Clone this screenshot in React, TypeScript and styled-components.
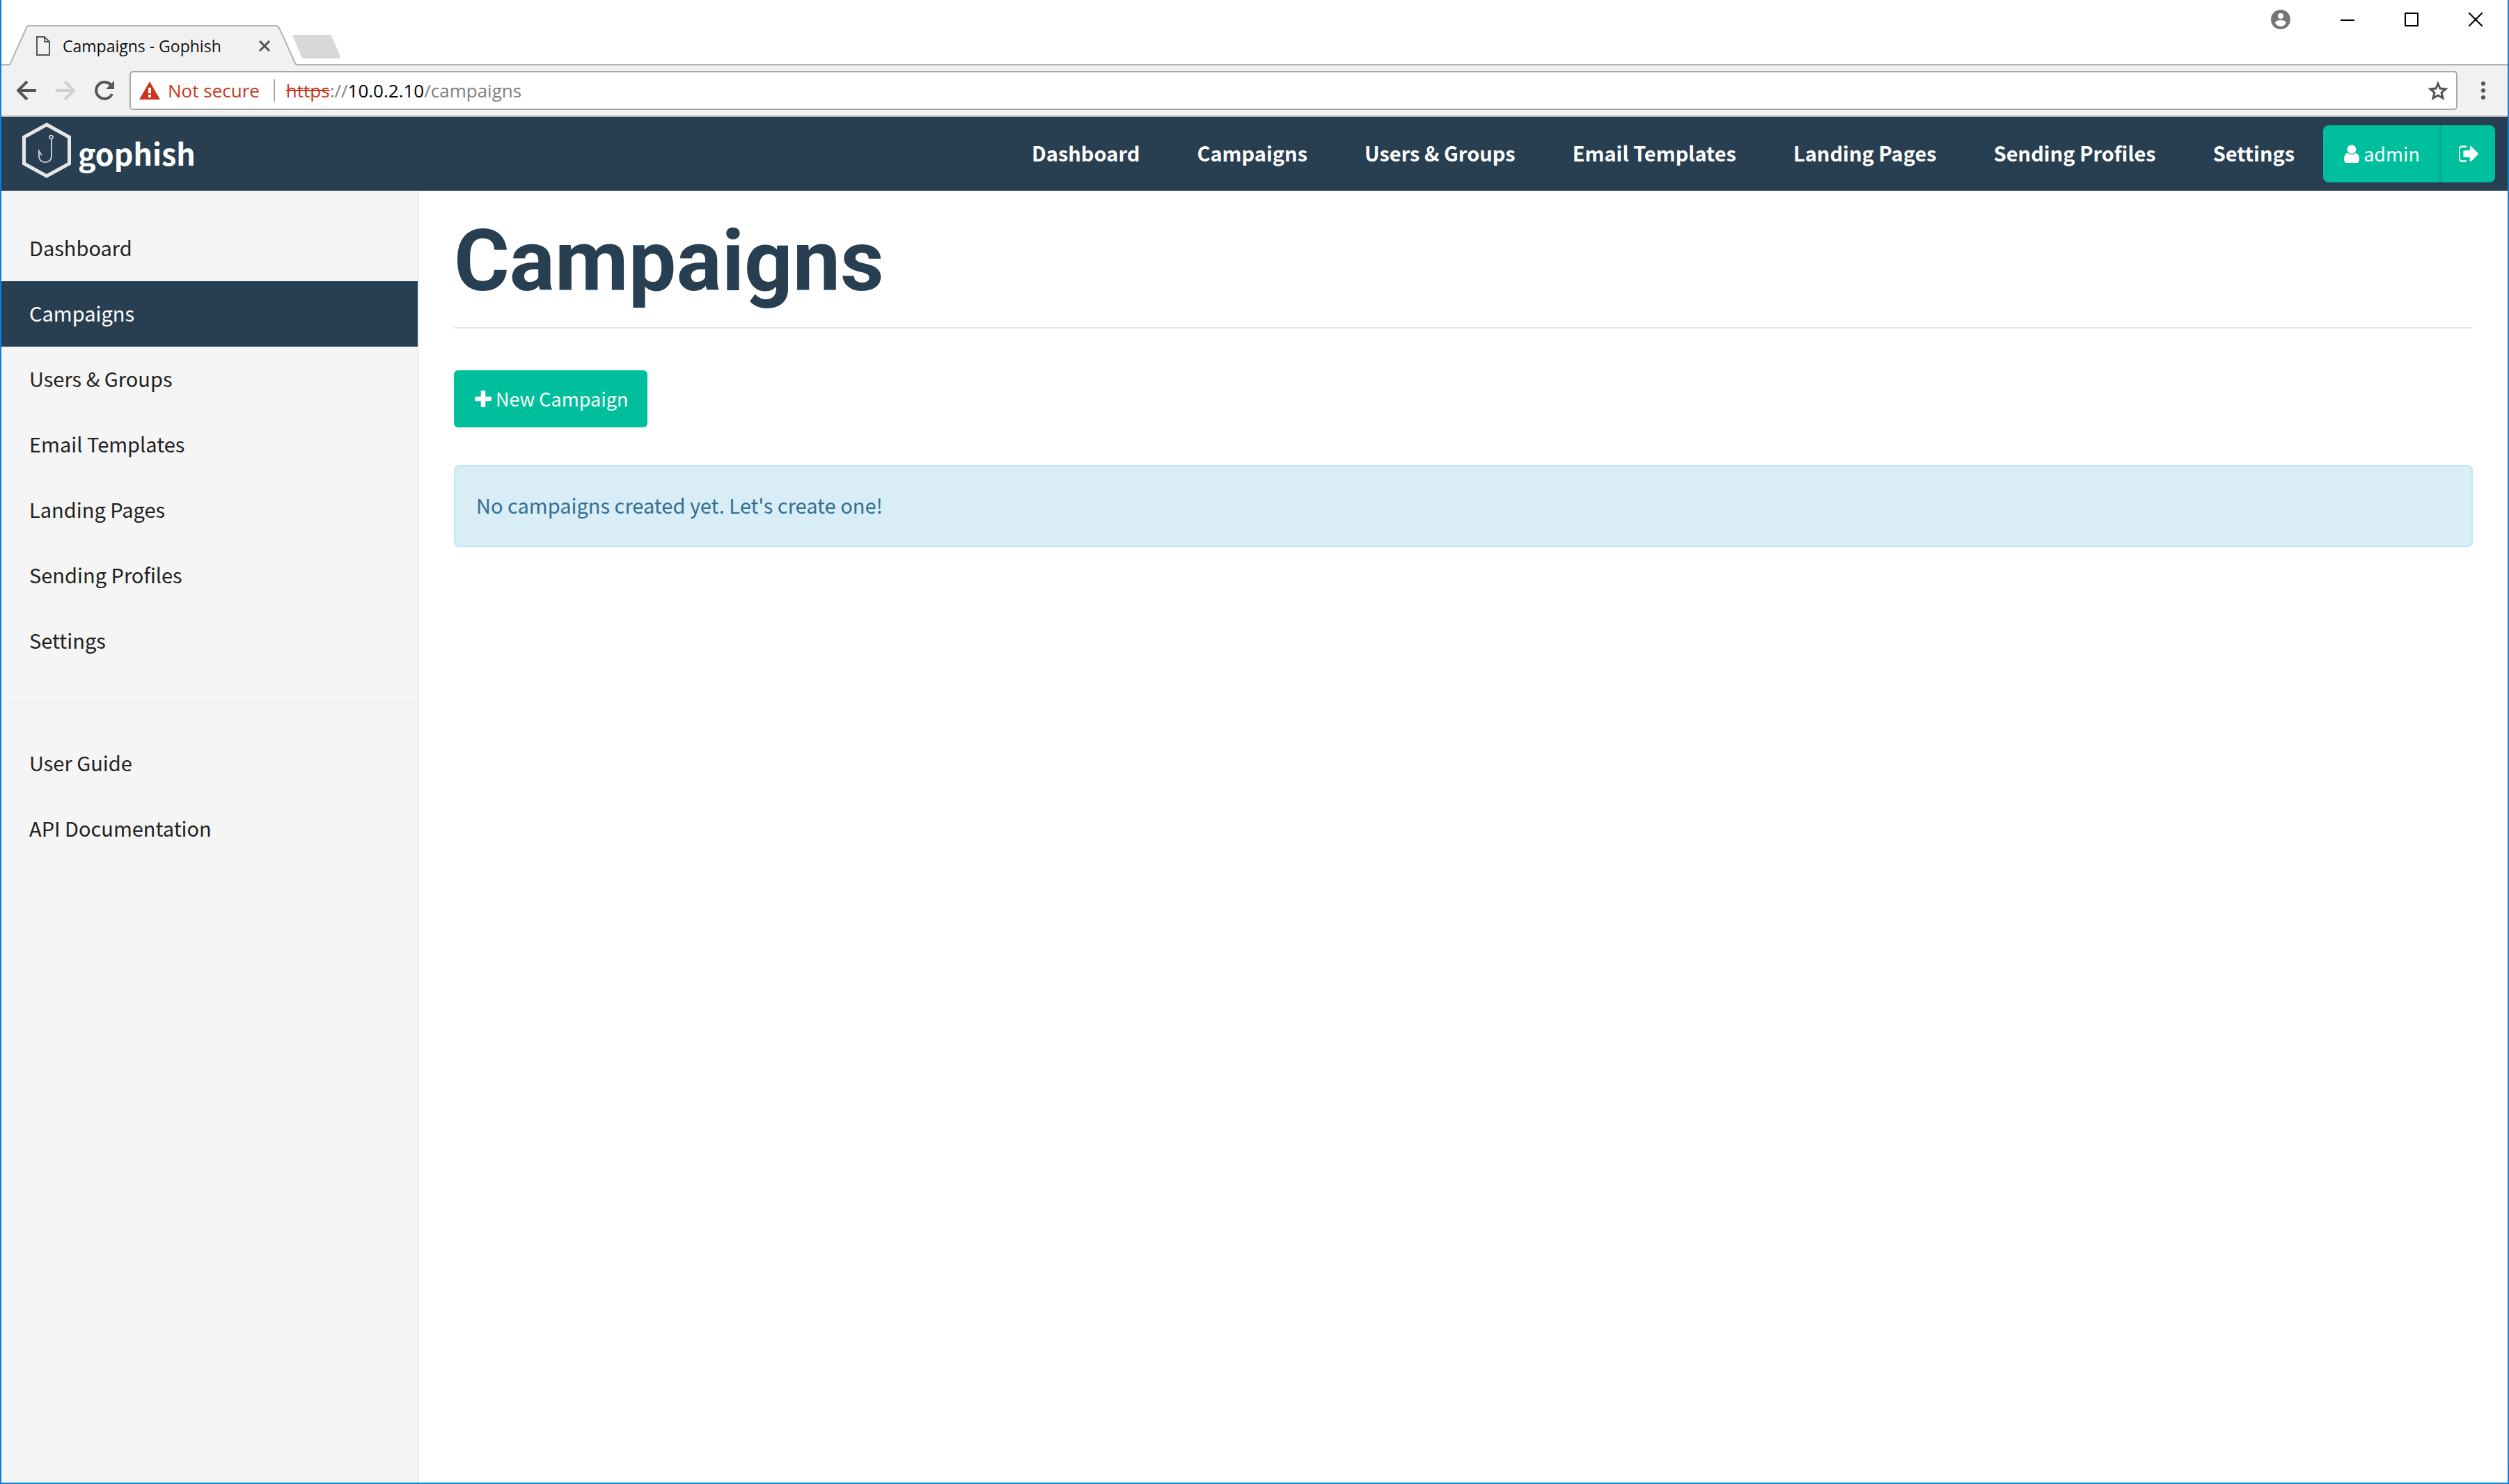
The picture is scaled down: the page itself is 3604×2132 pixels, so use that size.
import React from "react";
import styled, { createGlobalStyle } from "styled-components";

const sans = `"Noto Sans CJK SC", "Noto Sans", sans-serif`;
const chromeFont = `"Open Sans", "Noto Sans", sans-serif`;
const navy = "#283f52";
const green = "#00bf9d";

const GlobalStyle = createGlobalStyle`
  *, *::before, *::after { box-sizing: border-box; }
  body { margin: 0; background: #fff; font-family: ${sans}; }
  button { font: inherit; border: 0; padding: 0; background: none; cursor: pointer; }
  a { text-decoration: none; color: inherit; }
  ul { list-style: none; margin: 0; padding: 0; }
  svg { display: block; flex: none; }
`;

const Window = styled.div`
  min-height: 100vh;
  display: flex;
  flex-direction: column;
  border: 2px solid #0a80dc;
  border-top: 0;
`;

/* ---------- browser chrome ---------- */

const TitleBar = styled.header`
  height: 94px;
  display: flex;
  align-items: flex-end;
  padding-left: 12px;
  border-bottom: 2px solid #b2b2b2;
  font-family: ${chromeFont};
`;

const Tab = styled.div`
  display: grid;
  width: 412px;
  height: 58px;
  margin-bottom: -2px;
  > * { grid-area: 1 / 1; }
`;

const TabContent = styled.div`
  display: flex;
  align-items: center;
  padding: 2px 38px 0 38px;
  font-size: 23px;
  line-height: 32px;
  color: #111;
`;

const TabTitle = styled.span`
  flex: 1;
  margin-left: 18px;
  white-space: nowrap;
`;

const NewTab = styled.button`
  margin: 0 0 8px -6px;
`;

const WindowControls = styled.div`
  margin-left: auto;
  align-self: flex-start;
  display: flex;
  align-items: center;
  height: 56px;
`;

const WindowButton = styled.button`
  width: 92px;
  height: 56px;
  display: grid;
  place-items: center;
`;

const AccountButton = styled(WindowButton)`
  width: 100px;
`;

const Toolbar = styled.div`
  height: 74px;
  display: flex;
  align-items: center;
  padding: 0 20px 0 22px;
  background: #f1f1f1;
  border-bottom: 2px solid #b2b2b2;
  font-family: ${chromeFont};
`;

const ToolButton = styled.button`
  width: 28px;
  height: 28px;
  margin-right: 28px;
`;

const ReloadButton = styled(ToolButton)`
  margin-right: 22px;
`;

const MenuButton = styled.button`
  width: 30px;
  height: 28px;
  margin-left: 22px;
  display: grid;
  place-items: center;
`;

const AddressBar = styled.div`
  flex: 1;
  height: 56px;
  display: flex;
  align-items: center;
  padding: 0 12px;
  background: #fff;
  border: 2px solid #a9a9a9;
  border-radius: 5px;
  font-size: 26px;
  line-height: 36px;
`;

const Security = styled.button`
  display: flex;
  align-items: center;
  gap: 11px;
  color: #cb3520;
  white-space: nowrap;
`;

const Separator = styled.span`
  width: 2px;
  height: 32px;
  margin: 0 16px 0 20px;
  background: #a9a9a9;
`;

const Url = styled.div`
  flex: 1;
  color: #808080;
  white-space: nowrap;
`;

const Scheme = styled.span`
  color: #cb3520;
  text-decoration: line-through;
`;

const Host = styled.span`
  color: #000;
`;

/* ---------- web page ---------- */

const Navbar = styled.nav`
  height: 106px;
  display: flex;
  align-items: center;
  padding: 0 18px 0 30px;
  background: ${navy};
  color: #fff;
`;

const Brand = styled.a`
  display: flex;
  align-items: center;
  gap: 10px;
  margin-right: auto;
  padding-bottom: 4px;
  font-size: 43px;
  line-height: 60px;
  font-weight: 700;
`;

const BrandMark = styled.svg`
  margin-bottom: 6px;
`;

const NavList = styled.ul`
  display: flex;
`;

const NavLink = styled.a`
  display: block;
  padding: 0 41px 4px;
  font-size: 29px;
  line-height: 80px;
  font-weight: 700;
  white-space: nowrap;
`;

const ButtonGroup = styled.div`
  display: flex;
  height: 82px;
  border-radius: 8px;
  overflow: hidden;
`;

const Button = styled.button`
  height: 82px;
  display: flex;
  align-items: center;
  gap: 6px;
  padding: 0 28px 0 30px;
  border-radius: 6px;
  background: ${green};
  color: #fff;
  font-size: 27px;
  line-height: 40px;
`;

const GroupButton = styled(Button)`
  border-radius: 0;
  & + & {
    padding: 0 24px;
    border-left: 4px solid #00ad91;
  }
`;

const Page = styled.div`
  flex: 1;
  display: flex;
`;

const Sidebar = styled.aside`
  width: 600px;
  flex: none;
  padding-top: 36px;
  background: #f5f5f5;
  border-right: 2px solid #eee;
`;

const SideLink = styled.a<{ $active?: boolean }>`
  display: block;
  padding: 0 40px 4px;
  font-size: 29px;
  line-height: 90px;
  color: ${(p) => (p.$active ? "#fff" : "#222")};
  background: ${(p) => (p.$active ? navy : "transparent")};
`;

const Divider = styled.hr`
  height: 2px;
  margin: 40px 0;
  border: 0;
  background: #eee;
`;

const Main = styled.main`
  flex: 1;
  padding: 34px 50px;
`;

const Heading = styled.h1`
  margin: 0 0 60px;
  padding-bottom: 26px;
  border-bottom: 2px solid #e8e8ed;
  font-family: Roboto, sans-serif;
  font-size: 122px;
  line-height: 136px;
  font-weight: 700;
  color: ${navy};
`;

const Alert = styled.div`
  margin-top: 54px;
  padding: 32px 30px 36px;
  border: 2px solid #bce8f1;
  border-radius: 8px;
  background: #d9edf7;
  color: #31708f;
  font-size: 29px;
  line-height: 46px;
`;

const UserIcon = () => (
  <svg width="22" height="26" viewBox="256 128 1280 1536" fill="currentColor" aria-hidden="true">
    <path d="M1536 1399q0 109-62.5 187t-150.5 78h-854q-88 0-150.5-78t-62.5-187q0-85 8.5-160.5t31.5-152 58.5-131 94-89 134.5-34.5q131 128 313 128t313-128q76 0 134.5 34.5t94 89 58.5 131 31.5 152 8.5 160.5zm-256-887q0 159-112.5 271.5t-271.5 112.5-271.5-112.5-112.5-271.5 112.5-271.5 271.5-112.5 271.5 112.5 112.5 271.5z" />
  </svg>
);

const SignOutIcon = () => (
  <svg width="28" height="24" viewBox="96 256 1536 1280" fill="currentColor" aria-hidden="true">
    <path d="M704 1440q0 4 1 20t.5 26.5-3 23.5-10 19.5-20.5 6.5h-320q-119 0-203.5-84.5t-84.5-203.5v-704q0-119 84.5-203.5t203.5-84.5h320q13 0 22.5 9.5t9.5 22.5q0 4 1 20t.5 26.5-3 23.5-10 19.5-20.5 6.5h-320q-66 0-113 47t-47 113v704q0 66 47 113t113 47h312l11.5 1 11.5 3 8 5.5 7 9 2 13.5zm928-544q0 26-19 45l-544 544q-19 19-45 19t-45-19-19-45v-288h-448q-26 0-45-19t-19-45v-384q0-26 19-45t45-19h448v-288q0-26 19-45t45-19 45 19l544 544q19 19 19 45z" />
  </svg>
);

const PlusIcon = () => (
  <svg width="24" height="28" viewBox="192 16 1408 1643" fill="currentColor" aria-hidden="true">
    <path d="M1600 736v192q0 40-28 68t-68 28h-416v416q0 40-28 68t-68 28h-192q-40 0-68-28t-28-68v-416h-416q-40 0-68-28t-28-68v-192q0-40 28-68t68-28h416v-416q0-40 28-68t68-28h192q40 0 68 28t28 68v416h416q40 0 68 28t28 68z" />
  </svg>
);

const Arrow = ({ color, flip }: { color: string; flip?: boolean }) => (
  <svg width="28" height="28" viewBox="0 0 28 28" fill="none" stroke={color} strokeWidth="4" aria-hidden="true">
    <path d={flip ? "M0 14H25M13 1L26 14L13 27" : "M28 14H3M15 1L2 14L15 27"} />
  </svg>
);

const links = [
  "Dashboard",
  "Campaigns",
  "Users & Groups",
  "Email Templates",
  "Landing Pages",
  "Sending Profiles",
  "Settings",
];

export default function App() {
  return (
    <>
      <GlobalStyle />
      <Window>
        <TitleBar>
          <Tab>
            <svg width="412" height="58" viewBox="0 0 412 58" aria-hidden="true">
              <path d="M0 58L1 56L24 4Q25 1 28 1H382Q385 1 387 4L410 56L412 58Z" fill="#f1f1f1" />
              <path d="M0 57L24 4Q25 1 28 1H382Q385 1 387 4L411 57" fill="none" stroke="#b2b2b2" strokeWidth="2" />
            </svg>
            <TabContent>
              <svg width="20" height="28" viewBox="0 0 20 28" fill="none" stroke="#555" strokeWidth="2" aria-hidden="true">
                <path d="M1 1H12L19 8V27H1ZM12 1V8H19" />
              </svg>
              <TabTitle>Campaigns - Gophish</TabTitle>
              <button aria-label="Close tab">
                <svg width="16" height="16" viewBox="0 0 16 16" stroke="#555" strokeWidth="3" aria-hidden="true">
                  <path d="M1 1L15 15M15 1L1 15" />
                </svg>
              </button>
            </TabContent>
          </Tab>
          <NewTab aria-label="New tab">
            <svg width="70" height="34" viewBox="0 0 70 34" aria-hidden="true">
              <path d="M3 0H53Q56 0 57 3L69 31Q69 34 66 34H17Q14 34 13 31L1 3Q0 0 3 0Z" fill="#d8d8d8" />
            </svg>
          </NewTab>
          <WindowControls>
            <AccountButton aria-label="Account">
              <svg width="28" height="28" viewBox="0 0 28 28" aria-hidden="true">
                <circle cx="14" cy="14" r="14" fill="#757575" />
                <circle cx="14" cy="9" r="4" fill="#fff" />
                <path d="M6 19Q7 15 14 15T22 19Q19 24 14 24T6 19Z" fill="#fff" />
              </svg>
            </AccountButton>
            <WindowButton aria-label="Minimize">
              <svg width="20" height="20" viewBox="0 0 20 20" aria-hidden="true">
                <path d="M0 10H20V12H0Z" />
              </svg>
            </WindowButton>
            <WindowButton aria-label="Maximize">
              <svg width="20" height="20" viewBox="0 0 20 20" fill="none" stroke="#000" strokeWidth="2" aria-hidden="true">
                <path d="M1 1H19V19H1Z" />
              </svg>
            </WindowButton>
            <WindowButton aria-label="Close">
              <svg width="20" height="20" viewBox="0 0 20 20" stroke="#000" strokeWidth="2" aria-hidden="true">
                <path d="M0 0L20 20M20 0L0 20" />
              </svg>
            </WindowButton>
          </WindowControls>
        </TitleBar>

        <Toolbar>
          <ToolButton aria-label="Back">
            <Arrow color="#555" />
          </ToolButton>
          <ToolButton aria-label="Forward">
            <Arrow color="#d0d0d0" flip />
          </ToolButton>
          <ReloadButton aria-label="Reload">
            <svg width="28" height="28" viewBox="0 0 28 28" aria-hidden="true">
              <path d="M24 7A12 12 0 1 0 25 19" fill="none" stroke="#555" strokeWidth="4" />
              <path d="M28 0V12H16Z" fill="#555" />
            </svg>
          </ReloadButton>
          <AddressBar>
            <Security>
              <svg width="30" height="26" viewBox="0 0 30 26" aria-hidden="true">
                <path d="M15 0L30 26H0Z" fill="#cb3520" />
                <path d="M13 9H17V17H13ZM13 19H17V23H13Z" fill="#fff" />
              </svg>
              Not secure
            </Security>
            <Separator />
            <Url role="textbox" aria-label="Address">
              <Scheme>https</Scheme>://<Host>10.0.2.10</Host>/campaigns
            </Url>
            <button aria-label="Bookmark this page">
              <svg width="28" height="28" viewBox="0 0 28 28" fill="none" stroke="#555" strokeWidth="3" aria-hidden="true">
                <path d="M14 4L17 11L25 12L19 17L21 25L14 21L7 25L9 17L3 12L11 11Z" />
              </svg>
            </button>
          </AddressBar>
          <MenuButton aria-label="Menu">
            <svg width="6" height="26" viewBox="0 0 6 26" fill="#555" aria-hidden="true">
              <circle cx="3" cy="3" r="3" />
              <circle cx="3" cy="13" r="3" />
              <circle cx="3" cy="23" r="3" />
            </svg>
          </MenuButton>
        </Toolbar>

        <Navbar>
          <Brand href="#">
            <BrandMark width="70" height="80" viewBox="0 0 70 80" fill="none" aria-hidden="true">
              <path d="M35 3L67.500 21V59L35 77L2.500 59V21Z" stroke="#e6e6e6" strokeWidth="5" />
              <circle cx="41.500" cy="21" r="2.500" stroke="#dcdcdc" strokeWidth="1.500" />
              <path d="M42 24V49Q41 57 33 57Q25 57 24 49V41L28 47" stroke="#c3cad0" strokeWidth="2" />
            </BrandMark>
            gophish
          </Brand>
          <NavList>
            {links.map((label) => (
              <li key={label}>
                <NavLink href="#">{label}</NavLink>
              </li>
            ))}
          </NavList>
          <ButtonGroup>
            <GroupButton>
              <UserIcon />
              admin
            </GroupButton>
            <GroupButton aria-label="Sign out">
              <SignOutIcon />
            </GroupButton>
          </ButtonGroup>
        </Navbar>

        <Page>
          <Sidebar>
            <ul>
              {links.map((label) => (
                <li key={label}>
                  <SideLink href="#" $active={label === "Campaigns"}>
                    {label}
                  </SideLink>
                </li>
              ))}
            </ul>
            <Divider />
            <ul>
              <li>
                <SideLink href="#">User Guide</SideLink>
              </li>
              <li>
                <SideLink href="#">API Documentation</SideLink>
              </li>
            </ul>
          </Sidebar>
          <Main>
            <Heading>Campaigns</Heading>
            <Button>
              <PlusIcon />
              New Campaign
            </Button>
            <Alert role="status">No campaigns created yet. Let's create one!</Alert>
          </Main>
        </Page>
      </Window>
    </>
  );
}
